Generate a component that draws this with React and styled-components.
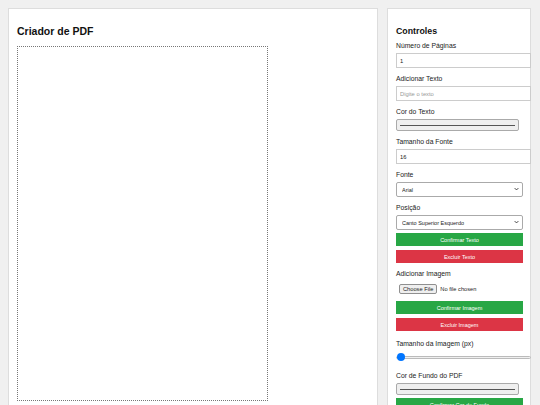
import React, { useState } from 'react';
import styled, { createGlobalStyle } from 'styled-components';

const GlobalStyle = createGlobalStyle`
    html, body {
        margin: 0;
        padding: 0;
        background-color: #f0f0f0;
        font-family: 'Liberation Sans', Arial, sans-serif;
        color: #222;
    }
`

function Chevron() {
    return (
        <Arrow viewBox="0 0 8 5" aria-hidden="true">
            <path d="M1 1 L4 4 L7 1" fill="none" stroke="#222" strokeWidth="1.3" />
        </Arrow>
    );
}

function App() {
    const [pages, setPages] = useState('1');
    const [text, setText] = useState('');
    const [textColor, setTextColor] = useState('#000000');
    const [fontSize, setFontSize] = useState('16');
    const [font, setFont] = useState('Arial');
    const [position, setPosition] = useState('top-left');
    const [imageSize, setImageSize] = useState(50);
    const [bgColor, setBgColor] = useState('#000000');

    return (
        <>
            <GlobalStyle />
            <Main>
                <Editor>
                    <Title>Criador de PDF</Title>
                    <Page />
                </Editor>
                <Controls>
                    <ControlsTitle>Controles</ControlsTitle>

                    <Group>
                        <Label>Número de Páginas</Label>
                        <Input type="number" min="1" value={pages} onChange={(e) => setPages(e.target.value)} />
                    </Group>

                    <Group>
                        <Label>Adicionar Texto</Label>
                        <Input type="text" placeholder="Digite o texto" value={text} onChange={(e) => setText(e.target.value)} />
                    </Group>

                    <Group>
                        <Label>Cor do Texto</Label>
                        <ColorInput type="color" value={textColor} onChange={(e) => setTextColor(e.target.value)} />
                    </Group>

                    <Group>
                        <Label>Tamanho da Fonte</Label>
                        <Input type="number" value={fontSize} onChange={(e) => setFontSize(e.target.value)} />
                    </Group>

                    <Group>
                        <Label>Fonte</Label>
                        <SelectWrap>
                            <Select value={font} onChange={(e) => setFont(e.target.value)}>
                                <option value="Arial">Arial</option>
                                <option value="Times">Times New Roman</option>
                                <option value="Courier">Courier</option>
                            </Select>
                            <Chevron />
                        </SelectWrap>
                    </Group>

                    <Group $after={3}>
                        <Label>Posição</Label>
                        <SelectWrap>
                            <Select value={position} onChange={(e) => setPosition(e.target.value)}>
                                <option value="top-left">Canto Superior Esquerdo</option>
                                <option value="top-right">Canto Superior Direito</option>
                                <option value="center">Centro</option>
                            </Select>
                            <Chevron />
                        </SelectWrap>
                    </Group>
                    <Button $variant="confirm">Confirmar Texto</Button>
                    <Button $variant="delete" $after={6}>Excluir Texto</Button>

                    <Group $after={7}>
                        <Label>Adicionar Imagem</Label>
                        <FileInput type="file" accept="image/*" />
                    </Group>
                    <Button $variant="confirm">Confirmar Imagem</Button>
                    <Button $variant="delete" $after={8}>Excluir Imagem</Button>

                    <Group $after={8}>
                        <Label>Tamanho da Imagem (px)</Label>
                        <Range type="range" min="50" max="500" value={imageSize} onChange={(e) => setImageSize(e.target.value)} />
                    </Group>

                    <Group $after={3}>
                        <Label>Cor de Fundo do PDF</Label>
                        <ColorInput type="color" value={bgColor} onChange={(e) => setBgColor(e.target.value)} />
                    </Group>
                    <Button $variant="confirm">Confirmar Cor de Fundo</Button>
                </Controls>
            </Main>
        </>
    );
}
export default App;

const Main = styled.main`
    display: flex;
    align-items: flex-start;
    gap: 9px;
    padding: 8px 9px 0 8px;
    height: 405px;
    box-sizing: border-box;
    overflow: hidden;
`
const Editor = styled.section`
    width: 370px;
    box-sizing: border-box;
    min-height: 420px;
    background-color: #ffffff;
    border: 1px solid #dddddd;
    padding: 0 8px;
`
const Title = styled.h2`
    font-size: 10.5px;
    line-height: 12px;
    font-weight: 700;
    margin: 16px 0 9px 0;
    color: #111;
`
const Page = styled.div`
    width: 251px;
    height: 355px;
    box-sizing: border-box;
    border: 1px dotted #777;
    background-color: #ffffff;
`
const Controls = styled.aside`
    width: 144px;
    box-sizing: border-box;
    min-height: 420px;
    background-color: #ffffff;
    border: 1px solid #dddddd;
    padding: 17px 8px 0 8px;
    display: flex;
    flex-direction: column;
`
const ControlsTitle = styled.h3`
    font-size: 8.8px;
    line-height: 10px;
    font-weight: 700;
    margin: 0 0 5px 0;
    color: #111;
`
const Group = styled.div`
    display: flex;
    flex-direction: column;
    align-items: flex-start;
    margin-bottom: ${props => props.$after ?? 6}px;
`
const Label = styled.label`
    font-size: 6.8px;
    line-height: 10px;
    color: #222;
    margin-bottom: 2px;
    white-space: nowrap;
`
const Input = styled.input`
    width: 135px;
    height: 15px;
    box-sizing: border-box;
    padding: 0 3px;
    margin: 0;
    border: 1px solid #cccccc;
    font-family: 'Liberation Sans', Arial, sans-serif;
    font-size: 5.8px;
    color: #222;
    outline: none;
    -moz-appearance: textfield;

    &::-webkit-outer-spin-button,
    &::-webkit-inner-spin-button {
        -webkit-appearance: none;
        margin: 0;
    }
    &::placeholder {
        color: #999;
    }
`
const ColorInput = styled.input`
    width: 123px;
    height: 12px;
    box-sizing: border-box;
    padding: 1px 3px;
    margin: 0;
    border: 1px solid #aaaaaa;
    border-radius: 2px;
    background-color: #efefef;

    &::-webkit-color-swatch-wrapper {
        padding: 0;
    }
    &::-webkit-color-swatch {
        border: none;
        border-top: 1px solid #efefef;
        height: 1px;
        margin-top: 3px;
        background-color: #555 !important;
    }
`
const SelectWrap = styled.div`
    position: relative;
    width: 127px;
`
const Select = styled.select`
    display: block;
    width: 127px;
    height: 15px;
    box-sizing: border-box;
    padding: 0 5px;
    margin: 0;
    border: 1px solid #aaaaaa;
    border-radius: 2px;
    background-color: #ffffff;
    font-family: 'Liberation Sans', Arial, sans-serif;
    font-size: 5.5px;
    color: #222;
    appearance: none;
    -webkit-appearance: none;
    outline: none;
`
const Arrow = styled.svg`
    position: absolute;
    right: 4px;
    top: 5px;
    width: 5px;
    height: 4px;
    pointer-events: none;
`
const Button = styled.button`
    display: block;
    width: 127px;
    height: 13px;
    margin: 0 0 ${props => props.$after ?? 4}px 0;
    padding: 0;
    border: none;
    background-color: ${props => props.$variant === 'delete' ? '#dc3545' : '#28a745'};
    color: #ffffff;
    font-family: 'Liberation Sans', Arial, sans-serif;
    font-size: 5.5px;
    cursor: pointer;
`
const FileInput = styled.input`
    margin: 3px 0 0 3px;
    font-family: 'Liberation Sans', Arial, sans-serif;
    font-size: 5.7px;
    color: #222;

    &::file-selector-button {
        font-family: 'Liberation Sans', Arial, sans-serif;
        font-size: 5.7px;
        padding: 1px 3px;
        margin-right: 3px;
        border: 1px solid #8f8f8f;
        border-radius: 2px;
        background-color: #efefef;
        color: #222;
    }
`
const Range = styled.input`
    -webkit-appearance: none;
    appearance: none;
    width: 135px;
    height: 12px;
    margin: 0;
    background: transparent;

    &::-webkit-slider-runnable-track {
        height: 3px;
        border-radius: 2px;
        border: 1px solid #bbbbbb;
        background: linear-gradient(to right, #0075ff 0 4px, #efefef 4px);
    }
    &::-webkit-slider-thumb {
        -webkit-appearance: none;
        width: 8px;
        height: 8px;
        margin-top: -3.5px;
        border-radius: 50%;
        background: #0075ff;
        border: none;
    }
`
